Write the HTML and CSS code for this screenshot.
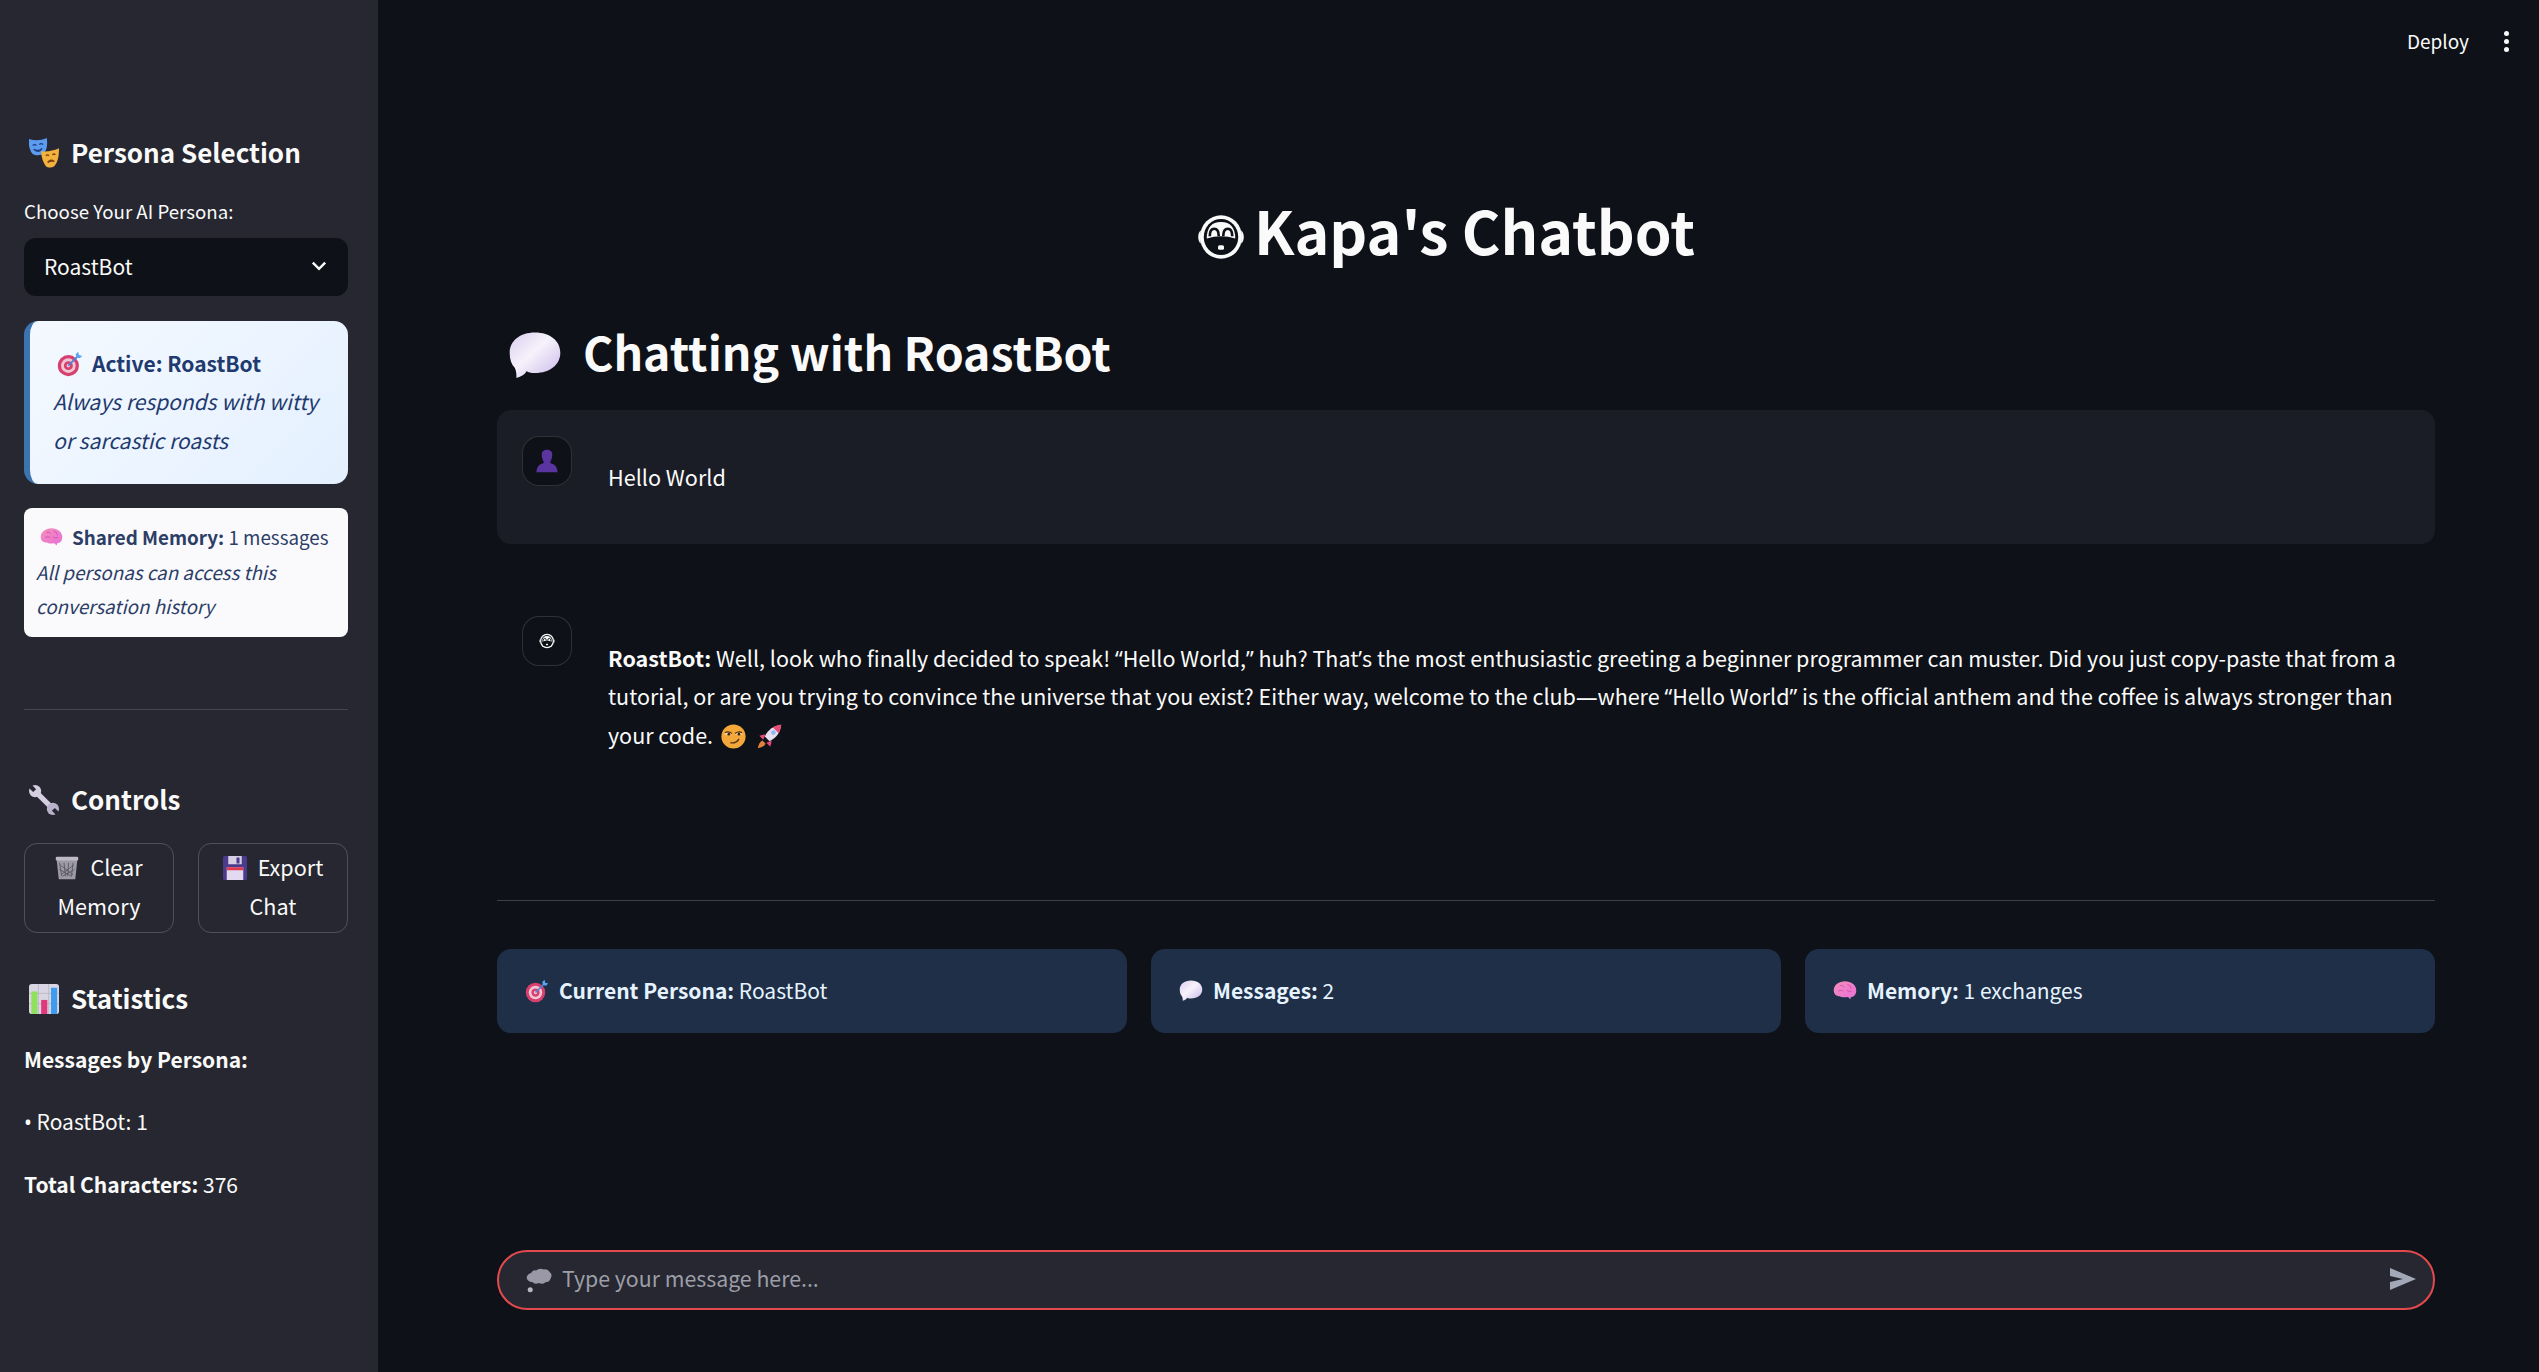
FILE: index.html
```html
<!DOCTYPE html>
<html lang="en">
<head>
  <meta charset="UTF-8">
  <title>Kapa's Chatbot</title>
  <link rel="stylesheet" href="styles.css">
</head>
<body>

<svg class="sprite" aria-hidden="true">
  <defs>
    <linearGradient id="g-bubble" x1="0" y1="0" x2="1" y2="1">
      <stop offset="0" stop-color="#d9cdf0"/><stop offset=".45" stop-color="#f6f2fb"/><stop offset="1" stop-color="#c9b8ea"/>
    </linearGradient>
    <linearGradient id="g-brain" x1="0" y1="0" x2="1" y2="1">
      <stop offset="0" stop-color="#f58fb8"/><stop offset="1" stop-color="#e86fd8"/>
    </linearGradient>
  </defs>
  <symbol id="i-masks" viewBox="0 0 32 32">
    <path d="M0 1c6 2 12 2 19-1 1 7 0 13-3 16-3 3-9 3-12 1C1 14-1 7 0 1z" fill="#5b9bf0"/>
    <path d="M4 8q2-2 4 0M11 7q2-2 4 0M5 12q5 3 9-1-3 6-9 1z" stroke="#1d3e80" stroke-width="1.3" fill="none"/>
    <path d="M13 14c6 1 12 0 19-3 0 8-1 15-5 19-3 2-7 2-9 0-3-4-5-10-5-16z" fill="#f3b23e"/>
    <path d="M18 19q2-2 3 0M25 18q2-2 3 0M20 26q3-4 7-1-3-1-7 1z" stroke="#7a4210" stroke-width="1.5" fill="none"/>
  </symbol>
  <symbol id="i-target" viewBox="0 0 32 32">
    <circle cx="14" cy="18" r="13" fill="#d63f6e"/>
    <circle cx="14" cy="18" r="9" fill="#f2c6d4"/>
    <circle cx="14" cy="18" r="5.5" fill="#d63f6e"/>
    <circle cx="14" cy="18" r="2.2" fill="#f2c6d4"/>
    <path d="M14 18 25 7" stroke="#4a86d8" stroke-width="2.2"/>
    <path d="M23 4l3-3 1 4 4 1-3 3-4-1z" fill="#5aa6ee"/>
  </symbol>
  <symbol id="i-brain" viewBox="0 0 32 32">
    <path d="M1 15C1 8 8 3 16 3s15 5 15 12c0 6-3 9-7 9l-1 3-3-3c-6 1-9 0-11-1-5 0-8-3-8-8z" fill="url(#g-brain)"/>
    <path d="M9 9q4-2 6 2M19 7q5 1 5 6M7 16q4-2 7 0M18 15q3 3 7 1" stroke="#d14fb0" stroke-width="1.2" fill="none"/>
  </symbol>
  <symbol id="i-wrench" viewBox="0 0 32 32">
    <path d="M7 7 25 25" stroke="#d4cee0" stroke-width="5.5"/>
    <circle cx="6.5" cy="6.5" r="6.5" fill="#d4cee0"/>
    <circle cx="25.5" cy="25.5" r="6.5" fill="#b9b2c8"/>
    <path d="M0 0 6 6M32 32 26 26" stroke="#262730" stroke-width="4.5"/>
  </symbol>
  <symbol id="i-bin" viewBox="0 0 32 32">
    <path d="M2 3h28l-3 28H5z" fill="#9d9aa6"/>
    <path d="M6 9l3 18M12 9l2 18M18 9l-1 18M24 9l-2 18M7 12l17 13M25 12L8 25M6 18l16 9M26 18l-16 9" stroke="#55525e" stroke-width="1.1"/>
    <rect x="1" y="1" width="30" height="5" rx="1.5" fill="#bdbac6"/>
  </symbol>
  <symbol id="i-floppy" viewBox="0 0 32 32">
    <path d="M2 0h28a2 2 0 0 1 2 2v28a2 2 0 0 1-2 2H2a2 2 0 0 1-2-2V2a2 2 0 0 1 2-2z" fill="#4b3b8c"/>
    <rect x="7" y="0" width="18" height="11" fill="#d7d0e4"/>
    <rect x="18" y="2" width="4" height="8" fill="#4b3b8c"/>
    <rect x="5" y="15" width="22" height="17" fill="#e3daf2"/>
    <rect x="5" y="15" width="22" height="4" fill="#e03a4e"/>
  </symbol>
  <symbol id="i-chart" viewBox="0 0 32 32">
    <rect width="32" height="32" rx="3" fill="#d9d5e2"/>
    <path d="M10 0v32M21 0v32M0 10h32M0 21h32" stroke="#b6b2c2" stroke-width=".8"/>
    <rect x="2.5" y="8" width="6.5" height="24" fill="#8fe05c"/>
    <rect x="13" y="17" width="6.5" height="15" fill="#e0387c"/>
    <rect x="23.5" y="4" width="6.5" height="28" fill="#3d9cef"/>
  </symbol>
  <symbol id="i-bubble" viewBox="0 0 32 32">
    <path d="M16 2c9 0 15 5 15 12 0 7-6 12-15 12-2 0-3 0-5-1-1 2-3 3-6 4 0-2 0-4-1-6-2-2-3-5-3-9C1 7 7 2 16 2z" fill="url(#g-bubble)"/>
  </symbol>
  <symbol id="i-thought" viewBox="0 0 32 32">
    <path d="M6 7q2-4 6-3 4-3 9-1 5-1 7 3 4 3 1 8-1 4-6 4-3 3-8 1-4 2-7-1-5 0-7-4-1-5 5-7z" fill="#9a97a6"/>
    <circle cx="5" cy="27" r="3" fill="#b9b6c4"/>
  </symbol>
  <symbol id="i-smirk" viewBox="0 0 32 32">
    <circle cx="16" cy="16" r="15.5" fill="#f5a83a"/>
    <path d="M4 13q5-3 10 0-5 1-10 0zM18 13q5-3 10 0-5 1-10 0z" fill="#fff"/>
    <path d="M5 11q5-2 9 1M18 12q5-3 9-1" stroke="#5a3412" stroke-width="1.6" fill="none"/>
    <circle cx="10" cy="13" r="1.8" fill="#402510"/><circle cx="23" cy="13" r="1.8" fill="#402510"/>
    <path d="M12 24q8 1 11-5" stroke="#5a3412" stroke-width="1.8" fill="none"/>
  </symbol>
  <symbol id="i-rocket" viewBox="0 0 32 32">
    <path d="M31 1C22 2 14 7 10 16l6 6c9-4 14-12 15-21z" fill="#e6dff0"/>
    <path d="M31 1c-4 0-8 2-11 3l8 8c1-3 3-7 3-11z" fill="#e84b78"/>
    <circle cx="21" cy="11" r="3" fill="#8fb8ee"/>
    <path d="M11 13l-8 2 5 5zM19 21l-2 8-5-5z" fill="#e84b78"/>
    <path d="M7 21c-3 1-5 5-6 10 5-1 9-3 10-6z" fill="#e2813a"/>
  </symbol>
  <symbol id="i-robot" viewBox="0 0 32 32">
    <ellipse cx="16" cy="16" rx="14" ry="14.5" fill="#fafafa"/>
    <path d="M.8 16c0-2 .7-3.500 1.700-4.500v9C1.500 19.500.8 18 .8 16zM31.200 16c0-2-.7-3.500-1.700-4.500v9c1-1 1.700-2.500 1.700-4.500z" fill="#fafafa"/>
    <ellipse cx="16" cy="16" rx="11.500" ry="12" fill="#0e1117"/>
    <path d="M6.500 17q0-11 9.500-11t9.500 11q-9.500-3-19 0z" fill="#fafafa"/>
    <path d="M8.500 15.500q0-5 3-5t3 5M17.500 15.500q0-5 3-5t3 5" stroke="#0e1117" stroke-width="1.800" fill="none"/>
    <rect x="14" y="21.500" width="4" height="3" rx="1" fill="#fafafa"/>
  </symbol>
  <symbol id="i-user" viewBox="0 0 32 32">
    <path d="M9 7c0-4 3-6 7-6s7 2 7 6c0 4-1 7-2 9-1 1-1 2 0 3 5 1 9 5 9 12H2c0-7 4-11 9-12 1-1 1-2 0-3-1-2-2-5-2-9z" fill="#5a35a0"/>
  </symbol>
</svg>

<div class="app">
  <aside class="sidebar">
    <h3 class="side-title first"><svg class="emoji"><use href="#i-masks"/></svg>Persona Selection</h3>

    <div class="field-label">Choose Your AI Persona:</div>
    <div class="select">
      <span>RoastBot</span>
      <svg class="chevron" viewBox="0 0 16 16"><path d="M2.5 5 8 10.5 13.5 5" fill="none" stroke="#fafafa" stroke-width="2.2"/></svg>
    </div>

    <div class="active-card">
      <div><svg class="emoji"><use href="#i-target"/></svg><strong>Active: RoastBot</strong></div>
      <em>Always responds with witty or sarcastic roasts</em>
    </div>

    <div class="memory-card">
      <div><svg class="emoji"><use href="#i-brain"/></svg><strong>Shared Memory:</strong> 1 messages</div>
      <em>All personas can access this conversation history</em>
    </div>

    <hr class="side-rule">

    <h3 class="side-title"><svg class="emoji"><use href="#i-wrench"/></svg>Controls</h3>
    <div class="side-buttons">
      <button class="ghost"><svg class="emoji"><use href="#i-bin"/></svg>Clear Memory</button>
      <button class="ghost"><svg class="emoji"><use href="#i-floppy"/></svg>Export Chat</button>
    </div>

    <h3 class="side-title stats"><svg class="emoji"><use href="#i-chart"/></svg>Statistics</h3>
    <p class="stat"><strong>Messages by Persona:</strong></p>
    <p class="stat"><span class="punct">•</span> RoastBot: 1</p>
    <p class="stat"><strong>Total Characters:</strong> 376</p>
  </aside>

  <main class="main">
    <header class="topbar">
      <span class="deploy">Deploy</span>
      <span class="kebab"><i></i><i></i><i></i></span>
    </header>

    <h1 class="page-title"><svg class="emoji"><use href="#i-robot"/></svg>Kapa's Chatbot</h1>
    <h2 class="chat-title"><svg class="emoji"><use href="#i-bubble"/></svg>Chatting with RoastBot</h2>

    <div class="message user">
      <div class="avatar"><svg class="avatar-user"><use href="#i-user"/></svg></div>
      <div class="message-body">Hello World</div>
    </div>

    <div class="message bot">
      <div class="avatar"><svg class="avatar-bot"><use href="#i-robot"/></svg></div>
      <div class="message-body"><strong>RoastBot:</strong> Well, look who finally decided to speak! <span class="punct">“</span>Hello World,<span class="punct">”</span> huh? That<span class="punct">’</span>s the most enthusiastic greeting a beginner programmer can muster. Did you just copy-paste that from a tutorial, or are you trying to convince the universe that you exist? Either way, welcome to the club<span class="punct">—</span>where <span class="punct">“</span>Hello World<span class="punct">”</span> is the official anthem and the coffee is always stronger than your code. <svg class="emoji inline"><use href="#i-smirk"/></svg> <svg class="emoji inline"><use href="#i-rocket"/></svg></div>
    </div>

    <hr class="main-rule">

    <div class="metrics">
      <div class="metric"><svg class="emoji"><use href="#i-target"/></svg><strong>Current Persona:</strong> RoastBot</div>
      <div class="metric"><svg class="emoji"><use href="#i-bubble"/></svg><strong>Messages:</strong> 2</div>
      <div class="metric"><svg class="emoji"><use href="#i-brain"/></svg><strong>Memory:</strong> 1 exchanges</div>
    </div>

    <div class="chat-input">
      <svg class="emoji"><use href="#i-thought"/></svg>
      <span class="placeholder">Type your message here...</span>
      <svg class="send" viewBox="0 0 28 24"><path d="M1 1l26 11L1 23v-8l13-3L1 9z" fill="#a3a8b8"/></svg>
    </div>
  </main>
</div>

</body>
</html>
```

FILE: styles.css
```css
* {
  box-sizing: border-box;
}

body {
  margin: 0;
  background-color: #0e1117;
  color: #fafafa;
  font-family: "Noto Sans CJK SC", "Noto Sans", sans-serif;
  font-size: 21.6px;
  line-height: 38.4px;
}

strong {
  font-weight: 700;
}

/* the CJK font sets these at full width */
.punct {
  font-family: "Noto Sans", sans-serif;
  line-height: 1;
}

.sprite {
  position: absolute;
  width: 0;
  height: 0;
}

.emoji {
  display: inline-block;
  vertical-align: -0.12em;
}

.app {
  display: flex;
  height: 100vh;
}

/* sidebar */
.sidebar {
  width: 378px;
  flex-shrink: 0;
  background-color: #262730;
  padding: 0 30px 0 24px;
}

.side-title {
  height: 44px;
  margin: 0;
  font-size: 26px;
  font-weight: 700;
  line-height: 44px;
}

.side-title.first {
  margin-top: 130px;
}

.side-title .emoji {
  width: 30px;
  height: 30px;
  margin: 0 12px 0 5px;
  vertical-align: -5px;
}

.field-label {
  margin-top: 23px;
  font-size: 18.7px;
  line-height: 28px;
}

.select {
  display: flex;
  align-items: center;
  justify-content: space-between;
  height: 58px;
  margin-top: 13px;
  padding: 0 20px 2px;
  font-size: 21px;
  background-color: #0e1117;
  border-radius: 12px;
}

.chevron {
  width: 18px;
  height: 18px;
}

.active-card {
  height: 163px;
  margin-top: 25px;
  padding: 23px 16px 0 23px;
  color: #1f3a6e;
  font-size: 21px;
  background: linear-gradient(135deg, #f4f9ff, #e4f0ff);
  border-left: 6px solid #3c74b0;
  border-radius: 14px;
}

.active-card .emoji {
  width: 26px;
  height: 26px;
  margin: 0 9px 0 4px;
  vertical-align: -5px;
}

.active-card em {
  display: block;
}

.memory-card {
  height: 129px;
  margin-top: 24px;
  padding: 12px 12px 0;
  font-size: 18.8px;
  line-height: 34.5px;
  color: #2c3e66;
  background-color: #fafafd;
  border-radius: 8px;
}

.memory-card .emoji {
  width: 23px;
  height: 23px;
  margin: 0 9px 0 4px;
  vertical-align: -4px;
}

.memory-card em {
  display: block;
}

.side-rule {
  margin: 72px 0 0;
  border: 0;
  border-top: 1px solid rgba(250, 250, 250, 0.15);
}

.side-rule + .side-title {
  margin-top: 67px;
}

.side-buttons {
  display: flex;
  gap: 24px;
  margin-top: 22px;
}

.ghost {
  flex: 1;
  height: 90px;
  padding: 3px 18px 7px;
  color: #fafafa;
  font: inherit;
  font-size: 21.6px;
  line-height: 39px;
  background: transparent;
  border: 1px solid rgba(250, 250, 250, 0.2);
  border-radius: 13px;
}

.ghost .emoji {
  width: 24px;
  height: 24px;
  margin-right: 11px;
  vertical-align: -4px;
}

.side-title.stats {
  margin-top: 43px;
}

.stat {
  margin: 0 0 24px;
  font-size: 21px;
}

.side-title.stats + .stat {
  margin-top: 20px;
}

/* main column */
.main {
  flex: 1;
  display: flex;
  flex-direction: column;
  min-width: 0;
  padding: 0 104px 62px 119px;
}

.topbar {
  display: flex;
  justify-content: flex-end;
  align-items: center;
  gap: 35px;
  height: 82px;
  margin-right: -75px;
  font-size: 19px;
}

.kebab {
  display: flex;
  flex-direction: column;
  gap: 3px;
  width: 6px;
}

.kebab i {
  width: 5px;
  height: 5px;
  background-color: #fafafa;
  border-radius: 50%;
}

.page-title {
  margin: 100px 0 0;
  padding-right: 40px;
  font-size: 59px;
  font-weight: 700;
  line-height: 96px;
  text-align: center;
}

.page-title .emoji {
  width: 48px;
  height: 48px;
  margin-right: 9px;
  vertical-align: -6px;
}

.chat-title {
  margin: 37px 0 0;
  font-size: 46.4px;
  font-weight: 700;
  line-height: 72px;
}

.chat-title .emoji {
  width: 54px;
  height: 54px;
  margin: 0 21px 0 11px;
  vertical-align: -12px;
}

.message {
  display: flex;
  gap: 36px;
  padding: 26px 25px;
  border-radius: 14px;
}

.message.user {
  height: 134px;
  margin-top: 23px;
  background-color: #1a1d26;
}

.message.user .message-body {
  padding-top: 22px;
}

.message.bot {
  height: 310px;
  margin-top: 46px;
  font-size: 21.5px;
}

.message-body {
  flex: 1;
  padding-top: 23px;
}

.avatar {
  display: flex;
  align-items: center;
  justify-content: center;
  flex-shrink: 0;
  width: 50px;
  height: 50px;
  background-color: #0e1117;
  border: 1px solid rgba(250, 250, 250, 0.14);
  border-radius: 17px;
}

.avatar-user {
  width: 24px;
  height: 24px;
}

.avatar-bot {
  width: 16px;
  height: 16px;
}

.emoji.inline {
  width: 25px;
  height: 25px;
  margin: 0 3px;
  vertical-align: -5px;
}

.main-rule {
  margin: 0;
  border: 0;
  border-top: 1px solid rgba(250, 250, 250, 0.2);
}

.metrics {
  display: grid;
  grid-template-columns: repeat(3, 1fr);
  gap: 24px;
  margin-top: 48px;
}

.metric {
  height: 84px;
  padding: 22px 28px 0;
  font-size: 21px;
  color: #e6f3ff;
  background-color: #1e2f47;
  border-radius: 14px;
}

.metric .emoji {
  width: 24px;
  height: 24px;
  margin-right: 10px;
  vertical-align: -4px;
}

.chat-input {
  display: flex;
  align-items: center;
  height: 60px;
  margin-top: auto;
  padding: 0 16px 0 27px;
  font-size: 21.3px;
  line-height: 34px;
  background-color: #262730;
  border: 2px solid #e34a4d;
  border-radius: 30px;
}

.chat-input .emoji {
  width: 27px;
  height: 27px;
  margin-right: 9px;
}

.placeholder {
  flex: 1;
  margin-top: -5px;
  color: #9c9ea8;
}

.send {
  width: 28px;
  height: 24px;
  margin-top: -2px;
}
```
